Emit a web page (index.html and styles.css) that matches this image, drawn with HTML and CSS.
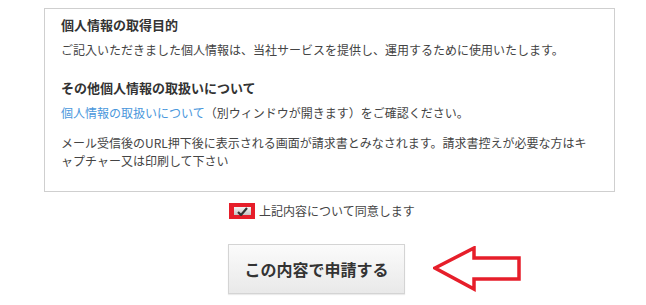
FILE: index.html
```html
<!DOCTYPE html>
<html lang="ja">
<head>
<meta charset="utf-8">
<link rel="stylesheet" href="styles.css">
</head>
<body>
<div class="panel">
  <h3 class="ttl">個人情報の取得目的</h3>
  <p class="txt">ご記入いただきました個人情報は、当社サービスを提供し、運用するために使用いたします。</p>
  <h3 class="ttl ttl2">その他個人情報の取扱いについて</h3>
  <p class="txt"><a class="lnk" href="#">個人情報の取扱いについて</a>（別ウィンドウが開きます）をご確認ください。</p>
  <p class="txt txt3">メール受信後のURL押下後に表示される画面が請求書とみなされます。請求書控えが必要な方はキャプチャー又は印刷して下さい</p>
</div>
<div class="agree">
  <span class="mark"><span class="cb"><svg width="11" height="9" viewBox="0 0 11 9"><path d="M1 5 L4 8 L10 1" fill="none" stroke="#333" stroke-width="2.2"/></svg></span></span>
  <span class="agree-txt">上記内容について同意します</span>
</div>
<div class="actions">
  <button class="submit">この内容で申請する</button>
  <svg class="arrow" width="90" height="46" viewBox="0 0 90 46">
    <path d="M2 22 L41 2 L41 12 L86 12 L86 33 L41 33 L41 43 Z" fill="none" stroke="#e61e2a" stroke-width="3.5" stroke-linejoin="miter"/>
  </svg>
</div>
</body>
</html>
```

FILE: styles.css
```css
html, body {
  margin: 0;
  padding: 0;
  background: #fff;
}
body {
  padding: 8px 0 0 0;
  font-family: "Noto Sans CJK JP", "Noto Sans", sans-serif;
  color: #333;
  width: 646px;
  height: 305px;
  overflow: hidden;
}
.panel {
  margin-left: 44px;
  width: 537px;
  border: 1px solid #cfcfcf;
  padding: 7px 16px 21px 16px;
}
.ttl {
  margin: 0 0 7px 0;
  font-size: 13px;
  line-height: 18px;
  font-weight: bold;
  color: #333;
}
.ttl2 {
  margin-top: 20px;
}
.txt {
  margin: 0;
  font-size: 12px;
  line-height: 18px;
  color: #444;
}
.txt3 {
  margin-top: 12px;
  line-break: normal;
}
.lnk {
  color: #4a97dc;
  text-decoration: none;
}
.agree {
  display: flex;
  align-items: center;
  margin-left: 229px;
  margin-top: 11px;
  height: 16px;
}
.mark {
  display: flex;
  align-items: center;
  justify-content: center;
  width: 26px;
  height: 16px;
  background: #e61e2a;
  box-sizing: border-box;
}
.cb {
  display: flex;
  align-items: center;
  justify-content: center;
  width: 17px;
  height: 8px;
  background: linear-gradient(#f4f4f4, #c4c4c4);
}
.cb svg {
  display: block;
}
.agree-txt {
  margin-left: 4px;
  font-size: 12px;
  color: #444;
  line-height: 16px;
}
.actions {
  display: flex;
  align-items: center;
  margin-left: 228px;
  margin-top: 25px;
}
.submit {
  width: 177px;
  height: 50px;
  border: 1px solid #d4d4d4;
  background: linear-gradient(#fbfbfb, #e9e9e9);
  font-family: "Noto Sans CJK JP", sans-serif;
  font-size: 16px;
  font-weight: bold;
  color: #333;
  padding: 0;
  box-shadow: 0 1px 1px rgba(0,0,0,0.08);
}
.arrow {
  display: block;
  margin-left: 28px;
}
```
